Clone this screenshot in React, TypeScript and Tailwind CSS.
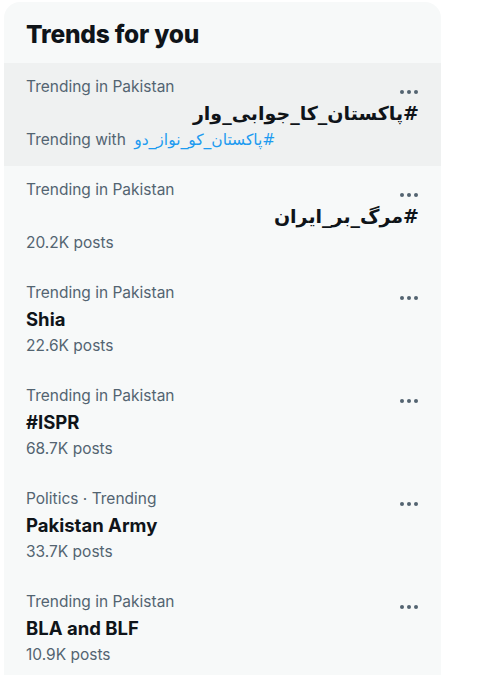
import React from "react";

type Trend = {
  meta: string;
  title: string;
  rtl?: boolean;
  posts?: string;
  withTag?: string;
  hover?: boolean;
};

const trends: Trend[] = [
  { meta: "Trending in Pakistan", title: "#پاکستان_کا_جوابی_وار", rtl: true, withTag: "#پاکستان_کو_نواز_دو", hover: true },
  { meta: "Trending in Pakistan", title: "#مرگ_بر_ایران", rtl: true, posts: "20.2K posts" },
  { meta: "Trending in Pakistan", title: "Shia", posts: "22.6K posts" },
  { meta: "Trending in Pakistan", title: "#ISPR", posts: "68.7K posts" },
  { meta: "Politics · Trending", title: "Pakistan Army", posts: "33.7K posts" },
  { meta: "Trending in Pakistan", title: "BLA and BLF", posts: "10.9K posts" },
];

function Dots() {
  return (
    <svg width="20" height="6" viewBox="0 0 20 6" className="block">
      <circle cx="3" cy="3" r="2" fill="#536471" />
      <circle cx="10" cy="3" r="2" fill="#536471" />
      <circle cx="17" cy="3" r="2" fill="#536471" />
    </svg>
  );
}

function Row({ t }: { t: Trend }) {
  return (
    <div className={`relative h-[103px] pl-[22px] pr-[22px] pt-[14px] ${t.hover ? "bg-[#eff1f1]" : ""}`}>
      <div className="absolute right-[22px] top-[26px]">
        <Dots />
      </div>
      <div className="text-[15.5px] leading-[20px] text-[#536471]">{t.meta}</div>
      <div
        dir={t.rtl ? "rtl" : "ltr"}
        className={`mt-1 leading-[24px] font-bold text-[#0f1419] ${t.rtl ? "text-right text-[19px]" : "text-[18.5px]"}`}
        style={t.rtl ? { fontFamily: '"DejaVu Sans", sans-serif' } : undefined}
      >
        {t.title}
      </div>
      {t.withTag ? (
        <div className="mt-[5px] text-[15.5px] leading-[20px] text-[#536471]">
          Trending with{" "}
          <span className="ml-1 text-[#1d9bf0]" style={{ fontFamily: '"DejaVu Sans", sans-serif', fontSize: "15.5px" }} dir="rtl">
            {t.withTag}
          </span>
        </div>
      ) : (
        <div className="mt-[5px] text-[15.5px] leading-[20px] text-[#536471]">{t.posts}</div>
      )}
    </div>
  );
}

export default function App() {
  return (
    <div className="min-h-[675px] bg-white pl-[4px] pt-[2px]" style={{ fontFamily: 'Inter, "Noto Sans", sans-serif' }}>
      <div className="w-[437px] overflow-hidden rounded-t-[16px] bg-[#f7f9f9]">
        <div className="h-[61px] flex items-center pl-[22px] pt-[2px]">
          <h2 className="text-[24.5px] leading-[28px] font-extrabold text-[#0f1419] tracking-[-0.2px]">Trends for you</h2>
        </div>
        {trends.map((t, i) => (
          <Row key={i} t={t} />
        ))}
      </div>
    </div>
  );
}
